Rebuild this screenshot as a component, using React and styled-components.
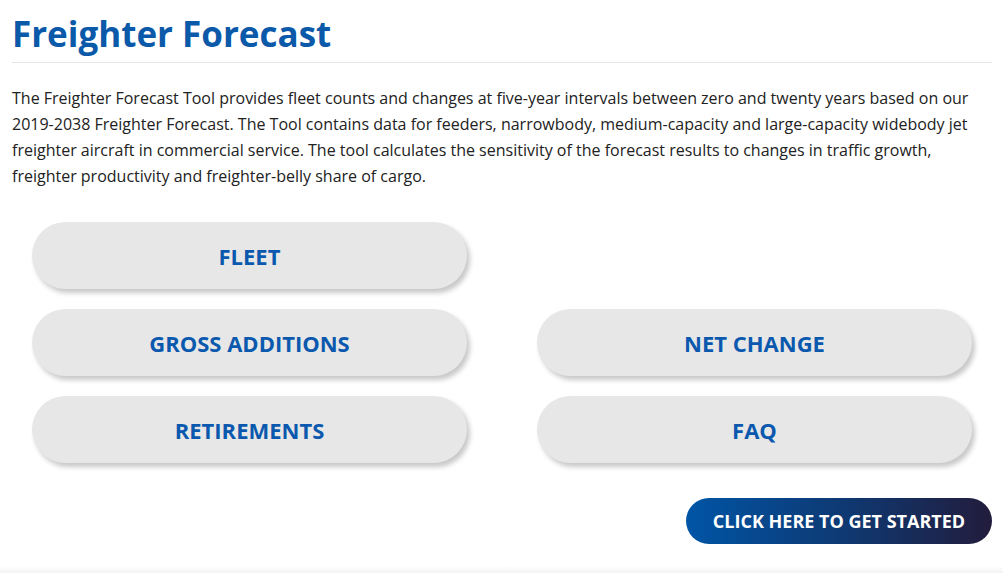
import styled, { createGlobalStyle } from 'styled-components';

const GlobalStyle = createGlobalStyle`
  html, body {
    margin: 0;
    padding: 0;
    background: #fff;
  }

  body {
    font-family: 'Open Sans', 'Noto Sans', sans-serif;
    overflow: hidden;
  }
`;

const Page = styled.main`
  width: 1003px;
  height: 573px;
  position: relative;
  box-sizing: border-box;
  padding: 0 11px 0 12px;
`;

const Header = styled.header`
  border-bottom: 1px solid #e6e6e6;
  padding-top: 12px;
  height: 50px;

  h1 {
    margin: 0;
    font-size: 35px;
    line-height: 44px;
    font-weight: 700;
    color: #0b59a9;
  }
`;

const Intro = styled.p`
  margin: 22px 0 0;
  font-size: 16px;
  line-height: 26px;
  color: #222;
`;

const ButtonGrid = styled.nav`
  display: grid;
  grid-template-columns: 435px 435px;
  column-gap: 70px;
  row-gap: 20px;
  margin: 33px 0 0 20px;
`;

const NavButton = styled.button`
  grid-column: ${(p) => p.$col};
  height: 67px;
  border: none;
  border-radius: 34px;
  background: #e7e7e7;
  box-shadow: 3px 4px 5px rgba(0, 0, 0, 0.22);
  font-family: inherit;
  font-size: 22px;
  font-weight: 700;
  color: #0b59ae;
  cursor: pointer;
`;

const CtaRow = styled.div`
  display: flex;
  justify-content: flex-end;
  margin-top: 35px;
`;

const Cta = styled.button`
  width: 306px;
  height: 46px;
  border: none;
  border-radius: 23px;
  background: linear-gradient(90deg, #0055a6 0%, #0e3a74 50%, #221c3c 100%);
  color: #fff;
  font-family: inherit;
  font-size: 18px;
  font-weight: 700;
  cursor: pointer;
`;

const FooterEdge = styled.div`
  position: absolute;
  left: 0;
  right: 0;
  bottom: 0;
  height: 7px;
  background: linear-gradient(180deg, #fff 0%, #f3f3f3 100%);
`;

const buttons = [
  { label: 'FLEET', col: 1 },
  { label: 'GROSS ADDITIONS', col: 1 },
  { label: 'NET CHANGE', col: 2 },
  { label: 'RETIREMENTS', col: 1 },
  { label: 'FAQ', col: 2 },
];

const App = () => (
  <>
    <GlobalStyle />
    <Page>
      <Header>
        <h1>Freighter Forecast</h1>
      </Header>
      <Intro>
        The Freighter Forecast Tool provides fleet counts and changes at five-year intervals between zero and
        twenty years based on our 2019-2038 Freighter Forecast. The Tool contains data for feeders, narrowbody,
        medium-capacity and large-capacity widebody jet freighter aircraft in commercial service. The tool
        calculates the sensitivity of the forecast results to changes in traffic growth, freighter productivity
        and freighter-belly share of cargo.
      </Intro>
      <ButtonGrid>
        {buttons.map((b) => (
          <NavButton key={b.label} $col={b.col}>
            {b.label}
          </NavButton>
        ))}
      </ButtonGrid>
      <CtaRow>
        <Cta>CLICK HERE TO GET STARTED</Cta>
      </CtaRow>
      <FooterEdge />
    </Page>
  </>
);

export default App;
